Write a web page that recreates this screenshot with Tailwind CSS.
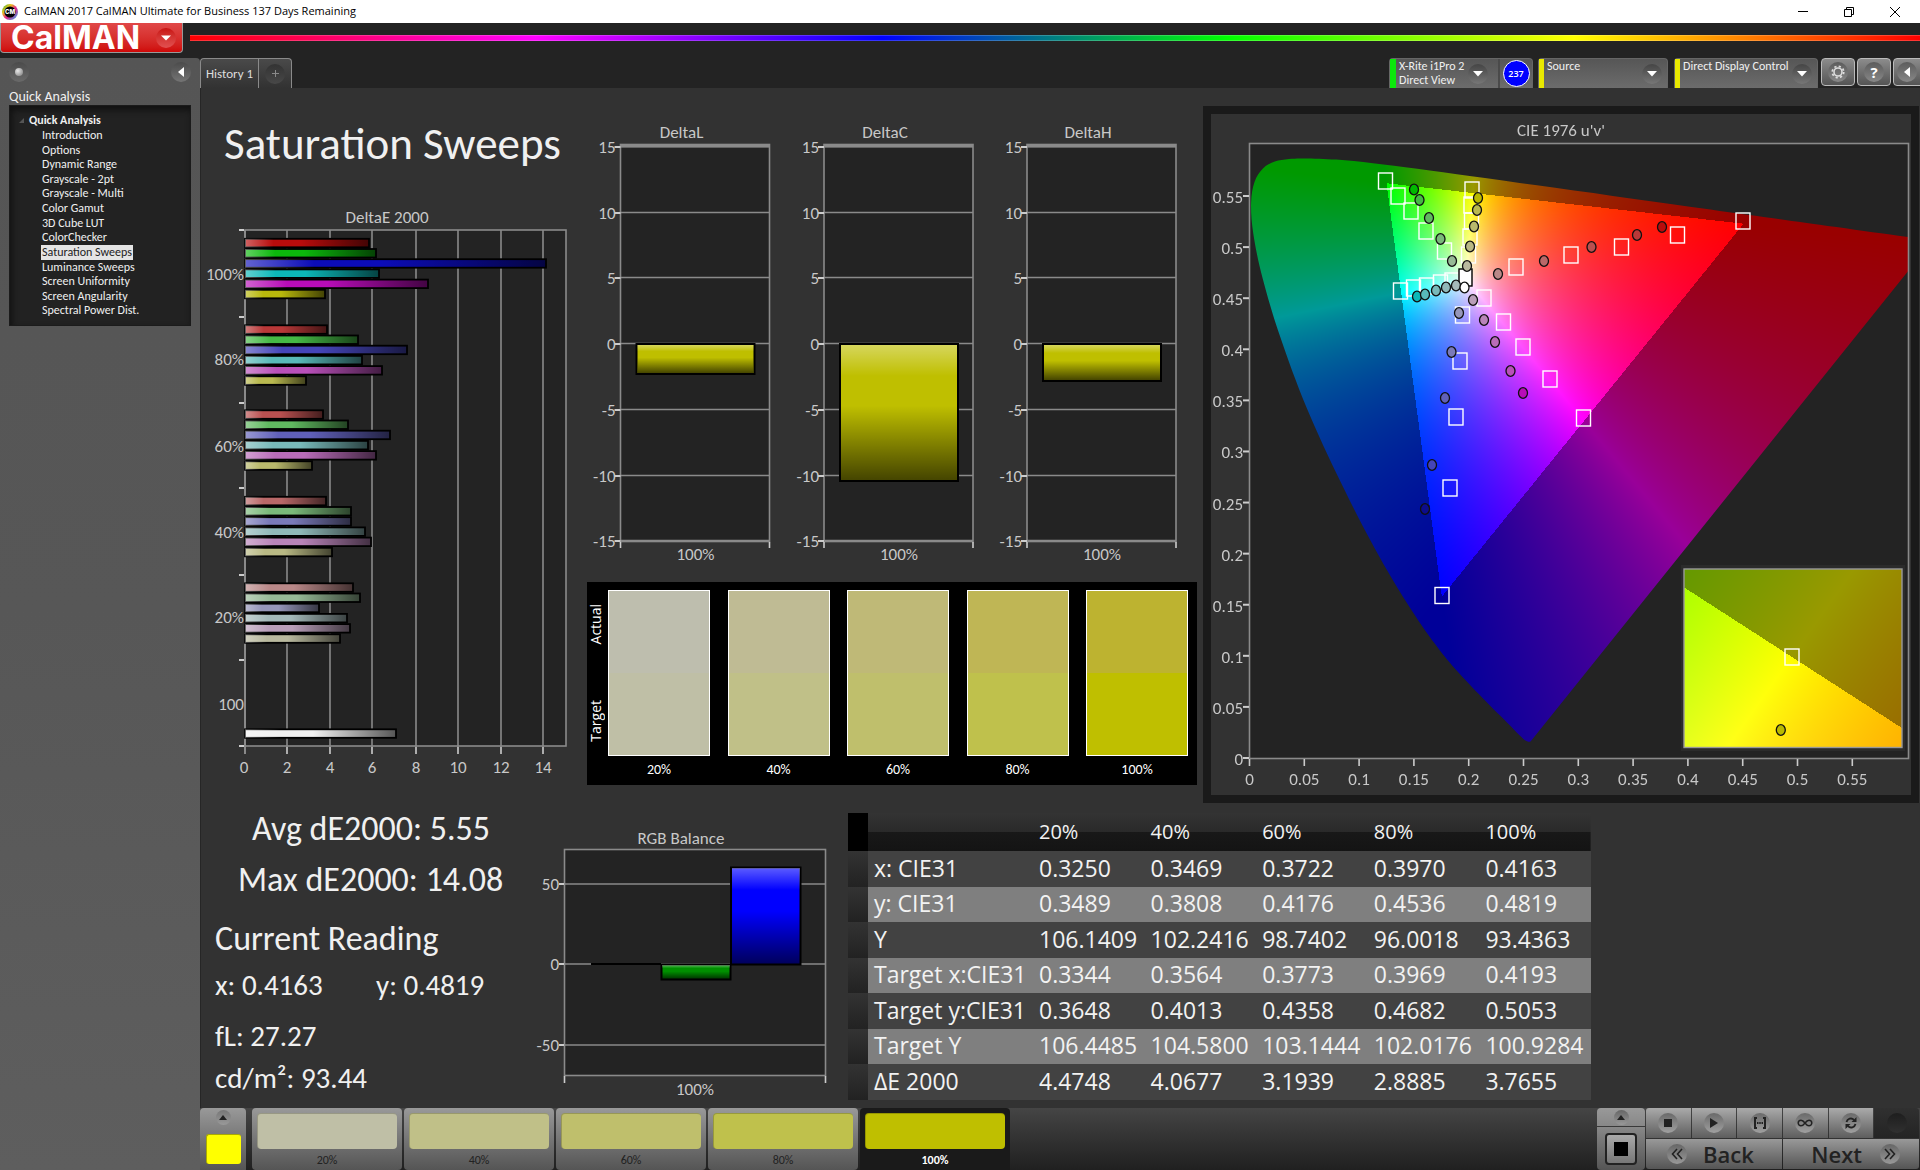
<!DOCTYPE html>
<html lang="en">
<head>
<meta charset="utf-8">
<title>CalMAN 2017</title>
<script src="https://cdn.jsdelivr.net/npm/@tailwindcss/browser@4"></script>
</head>
<body class="min-h-screen flex flex-col overflow-x-hidden bg-[#232323] font-[Carlito,Lato,sans-serif] text-[#f0f0f0]">

<!-- Window title bar -->
<div class="flex h-[23px] items-center bg-white pl-[2px] text-black">
  <svg width="16" height="16" viewBox="0 0 16 16"><defs><linearGradient id="lg" x1="0" y1="0" x2="1" y2="1"><stop offset="0" stop-color="#1fae3c"/><stop offset=".3" stop-color="#e8c21a"/><stop offset=".55" stop-color="#e2208c"/><stop offset="1" stop-color="#22b8f0"/></linearGradient></defs><circle cx="8" cy="8" r="8" fill="url(#lg)"/><circle cx="8" cy="8" r="5.6" fill="#000"/><text x="8" y="10.4" text-anchor="middle" font-family="Inter" font-size="6" font-weight="800" fill="#fff">CM</text></svg>
  <span class="ml-[6px] grow font-['Open_Sans',sans-serif] text-[11px]">CalMAN 2017 CalMAN Ultimate for Business 137 Days Remaining</span>
  <div class="mr-[2px] flex">
    <button aria-label="Minimize" class="flex w-[46px] justify-center"><svg width="12" height="12" viewBox="0 0 12 12"><path d="M1 5.500h10" stroke="#000"/></svg></button>
    <button aria-label="Restore" class="flex w-[46px] justify-center"><svg width="12" height="12" viewBox="0 0 12 12" fill="none" stroke="#000"><path d="M1.500 3.500h7v7h-7zM3.500 3.500v-2h7v7h-2"/></svg></button>
    <button aria-label="Close" class="flex w-[46px] justify-center"><svg width="12" height="12" viewBox="0 0 12 12" stroke="#000"><path d="M1 1l10 10M11 1L1 11"/></svg></button>
  </div>
</div>

<!-- Brand strip -->
<div class="flex h-[35px] items-start">
  <button class="flex h-[30px] w-[183px] items-center rounded-b-[4px] border-x border-b border-[#999] bg-linear-to-b from-[#e04848] to-[#cf0606] pl-[10px]">
    <span class="w-[133px] text-left font-[Inter,sans-serif] text-[32px] leading-[28px] font-bold text-white">CalMAN</span>
    <span class="ml-[12px] flex size-5 items-center justify-center rounded-full bg-linear-to-b from-[#c81010] to-[#e25050]"><svg width="10" height="6" viewBox="0 0 10 6"><path d="M0 .5h10L5 5.500z" fill="#fff"/></svg></span>
  </button>
  <div class="mt-[12px] ml-[7px] h-[6px] grow border-y border-white/20 bg-[linear-gradient(90deg,#f00,#f0f,#00f,#0f0,#ff0,#f00)] bg-origin-border"></div>
</div>

<div class="flex grow">
  <!-- Workflow sidebar -->
  <aside class="w-[200px] shrink-0 rounded-tr-[4px] bg-linear-to-b from-[#555] via-[#575757] to-[#5e5e5e] px-[9px]">
    <div class="flex h-[28px] items-center justify-between">
      <button aria-label="Pin" class="flex size-5 items-center justify-center rounded-full bg-linear-to-b from-[#4b4b4b] to-[#6a6a6a]"><span class="size-2 rounded-full bg-radial-[at_35%_35%] from-[#e8e8e8] to-[#777]"></span></button>
      <button aria-label="Collapse" class="flex size-5 items-center justify-center rounded-full bg-linear-to-b from-[#4b4b4b] to-[#757575]"><svg width="6" height="10" viewBox="0 0 6 10"><path d="M6 0v10L0 5z" fill="#fff"/></svg></button>
    </div>
    <h2 class="h-[19px] text-[14px] leading-[21px]">Quick Analysis</h2>
    <nav class="h-[221px] border border-[#1b1b1b] bg-[#222] pt-[7px] shadow-[inset_2px_4px_6px_#111]">
      <div class="flex h-[15px] items-center text-[12px] leading-[15px] font-bold"><svg class="ml-[9px] mr-[5px]" width="5" height="5" viewBox="0 0 5 5"><path d="M5 0v5H0z" fill="#555"/></svg>Quick Analysis</div>
      <ul class="grid h-[190px] auto-rows-fr pl-[31px] text-[12px] leading-[15px] [&_a]:inline-block [&_a]:px-px">
        <li><a href="#">Introduction</a></li><li><a href="#">Options</a></li><li><a href="#">Dynamic Range</a></li><li><a href="#">Grayscale - 2pt</a></li><li><a href="#">Grayscale - Multi</a></li><li><a href="#">Color Gamut</a></li><li><a href="#">3D Cube LUT</a></li><li><a href="#">ColorChecker</a></li><li><a href="#" class="bg-[#e4e4e4] text-[#222]">Saturation Sweeps</a></li><li><a href="#">Luminance Sweeps</a></li><li><a href="#">Screen Uniformity</a></li><li><a href="#">Screen Angularity</a></li><li><a href="#">Spectral Power Dist.</a></li>
      </ul>
    </nav>
  </aside>

  <div class="flex min-w-0 grow flex-col">
    <!-- Tabs and device selectors -->
    <div class="flex h-[30px] justify-between overflow-hidden">
      <div class="flex">
        <button class="w-[58px] rounded-tl-[4px] border-t border-l border-[#8a8a8a] bg-linear-to-b from-[#4a4a4a] to-[#323232] text-[13px] text-[#ddd]">History 1</button>
        <button aria-label="Add tab" class="flex w-[34px] items-center justify-center rounded-tr-[4px] border-t border-x border-[#8a8a8a] bg-linear-to-b from-[#4a4a4a] to-[#323232]"><span class="flex size-5 items-center justify-center rounded-full bg-linear-to-b from-[#333] to-[#484848]"><svg width="7" height="7" viewBox="0 0 7 7"><path d="M3.500 0v7M0 3.500h7" stroke="#8a8a8a"/></svg></span></button>
      </div>
      <div class="-mr-[10px] flex items-start text-[12px] leading-[14px]">
        <div class="mr-[5px] flex h-[30px] w-[144px] rounded-t-[4px] border-t border-x border-[#666] bg-linear-to-b from-[#565656] to-[#6c6c6c]">
          <span class="w-[6px] bg-[#0be80b]"></span>
          <button class="flex grow items-center justify-between pr-[10px] pl-[3px] text-left"><span class="pb-[2px]">X-Rite i1Pro 2<br>Direct View</span><span class="flex size-5 items-center justify-center rounded-full bg-linear-to-b from-[#454545] to-[#777]"><svg width="10" height="6" viewBox="0 0 10 6"><path d="M0 0h10L5 5.500z" fill="#fff"/></svg></span></button>
          <span class="flex w-[34px] items-center justify-center border-l-2 border-[#4a4a4a]"><span class="flex size-[27px] shrink-0 items-center justify-center rounded-full border border-white bg-[#0000ff] font-['Open_Sans',sans-serif] text-[9px] font-semibold text-white">237</span></span>
        </div>
        <button class="mr-[6px] flex h-[30px] w-[130px] rounded-t-[4px] border-t border-x border-[#666] bg-linear-to-b from-[#565656] to-[#6c6c6c]"><span class="h-full w-[5px] bg-[#e8e800]"></span><span class="grow pl-[3px] text-left">Source</span><span class="mt-[5px] mr-[5px] flex size-5 items-center justify-center rounded-full bg-linear-to-b from-[#454545] to-[#777]"><svg width="10" height="6" viewBox="0 0 10 6"><path d="M0 0h10L5 5.500z" fill="#fff"/></svg></span></button>
        <button class="mr-[3px] flex h-[30px] w-[144px] rounded-t-[4px] border-t border-x border-[#666] bg-linear-to-b from-[#565656] to-[#6c6c6c]"><span class="h-full w-[5px] bg-[#e8e800]"></span><span class="grow pl-[3px] text-left whitespace-nowrap">Direct Display Control</span><span class="mt-[5px] mr-[5px] flex size-5 shrink-0 items-center justify-center rounded-full bg-linear-to-b from-[#454545] to-[#777]"><svg width="10" height="6" viewBox="0 0 10 6"><path d="M0 0h10L5 5.500z" fill="#fff"/></svg></span></button>
        <button aria-label="Settings" class="mr-[2px] flex h-[28px] w-[34px] items-center justify-center rounded-[4px] border border-[#bbb] bg-linear-to-b from-[#8c8c8c] to-[#555]"><span class="flex size-5 items-center justify-center rounded-full bg-linear-to-b from-[#5c5c5c] to-[#888]"><svg width="14" height="14" viewBox="0 0 14 14" fill="none" stroke="#ddd"><circle cx="7" cy="7" r="4" stroke-width="1.600"/><circle cx="7" cy="7" r="5.700" stroke-width="1.800" stroke-dasharray="2.200 2.280"/></svg></span></button>
        <button aria-label="Help" class="mr-[2px] flex h-[28px] w-[34px] items-center justify-center rounded-[4px] border border-[#bbb] bg-linear-to-b from-[#8c8c8c] to-[#555]"><span class="flex size-5 items-center justify-center rounded-full bg-linear-to-b from-[#5c5c5c] to-[#888] font-['Open_Sans',sans-serif] text-[15px] font-bold text-white">?</span></button>
        <button aria-label="Hide" class="flex h-[28px] w-[37px] items-center rounded-[4px] border border-[#bbb] bg-linear-to-b from-[#8c8c8c] to-[#555] pl-[3px]"><span class="flex size-5 items-center justify-center rounded-full bg-linear-to-b from-[#5c5c5c] to-[#888]"><svg width="6" height="10" viewBox="0 0 6 10"><path d="M6 0v10L0 5z" fill="#fff"/></svg></span></button>
      </div>
    </div>

    <main class="grow border-l border-[#262626] bg-[#323232]">
      <div class="flex h-[715px]">
        <section class="w-[379px] shrink-0">
          <h1 class="mt-[20px] mb-[20px] pl-[23px] text-[45px] leading-[72px] whitespace-nowrap">Saturation Sweeps</h1>
          <svg id="deltae" width="379" height="590" viewBox="201 200 379 590" role="img" aria-label="DeltaE 2000"></svg>
        </section>
        <section class="w-[623px] shrink-0">
          <svg id="deltas" class="mt-[22px]" width="623" height="460" viewBox="580 110 623 460" role="img" aria-label="DeltaL, DeltaC, DeltaH"></svg>
          <div class="mt-[12px] ml-[7px] flex h-[203px] w-[610px] bg-black pt-[8px]">
            <div class="flex h-[166px] w-[21px] flex-col items-center justify-between py-[14px] pr-[4px] font-['Open_Sans',sans-serif] text-[14px] leading-[18px] font-medium text-white">
              <span class="rotate-180 [writing-mode:vertical-rl]">Actual</span><span class="rotate-180 [writing-mode:vertical-rl]">Target</span>
            </div>
            <div id="swatches" class="flex w-[580px] justify-between text-center text-[14px] text-white"></div>
          </div>
        </section>
        <section class="mt-[18px] mr-[1px] h-[697px] grow border-8 border-[#1a1a1a] bg-[#323232]">
          <div class="relative">
            <canvas id="gamut" width="700" height="680" class="absolute inset-0 h-full w-full"></canvas>
            <svg id="cie" class="relative block h-auto w-full" viewBox="1211 114 700 680" role="img" aria-label="CIE 1976 u'v'"></svg>
          </div>
        </section>
      </div>
      <div class="flex h-[305px] items-start">
        <section class="w-[329px] shrink-0 pl-[14px] text-[34px] leading-[51px] whitespace-nowrap">
          <p class="pl-[37px]">Avg dE2000: 5.55</p>
          <p class="pl-[23px]">Max dE2000: 14.08</p>
          <p class="mt-[8px]">Current Reading</p>
          <p class="flex text-[29px] leading-[42px]"><span class="w-[161px]">x: 0.4163</span><span>y: 0.4819</span></p>
          <p class="mt-[9px] text-[29px] leading-[42px]">fL: 27.27</p>
          <p class="text-[29px] leading-[42px]">cd/m²: 93.44</p>
        </section>
        <svg id="rgb" class="mt-[17px] shrink-0" width="310" height="285" viewBox="530 820 310 285" role="img" aria-label="RGB Balance"></svg>
        <table id="data" class="mt-[10px] ml-[8px] w-[743px] table-fixed border-collapse text-left font-['Open_Sans',sans-serif] text-[23px] leading-[30px] text-[#f2f2f2]">
          <colgroup><col class="w-[20px]"><col class="w-[165px]"><col><col><col><col><col></colgroup>
          <thead class="text-[20px]"><tr class="h-[38px] bg-[linear-gradient(#333,#2a2a2a_50%,#181818_50%,#141414)]"><td class="bg-black"></td><td></td><th class="pl-[6px] font-medium">20%</th><th class="pl-[6px] font-medium">40%</th><th class="pl-[6px] font-medium">60%</th><th class="pl-[6px] font-medium">80%</th><th class="pl-[6px] font-medium">100%</th></tr></thead>
          <tbody></tbody>
        </table>
      </div>
    </main>

    <!-- Pattern strip and transport controls -->
    <footer class="flex h-[62px] items-stretch bg-linear-to-b from-[#454545] to-[#202020] text-[#222]">
      <button aria-label="Current pattern" class="flex w-[46px] flex-col items-center rounded-t-[4px] bg-linear-to-b from-[#999] to-[#555]">
        <span class="mt-[2px] flex size-[15px] items-center justify-center rounded-full bg-linear-to-b from-[#777] to-[#999]"><svg width="8" height="5" viewBox="0 0 8 5"><path d="M0 5h8L4 0z" fill="#222"/></svg></span>
        <span class="mt-[9px] h-[30px] w-[35px] rounded-[3px] border-t border-l border-[#aaaa00] bg-[#ffff00]"></span>
      </button>
      <div id="patterns" class="ml-[6px] flex grow gap-[2px] text-[12px] leading-[18px]"></div>
      <div class="flex w-[48px] flex-col gap-px">
        <button aria-label="Expand" class="flex h-[18px] items-center justify-center rounded-t-[4px] bg-linear-to-b from-[#999] to-[#888]"><span class="flex size-[15px] items-center justify-center rounded-full bg-linear-to-b from-[#666] to-[#999]"><svg width="8" height="5" viewBox="0 0 8 5"><path d="M0 5h8L4 0z" fill="#222"/></svg></span></button>
        <button aria-label="Pattern window" class="flex grow items-center justify-center rounded-b-[4px] bg-linear-to-b from-[#888] to-[#555]"><span class="flex size-8 items-center justify-center rounded-[4px] border-2 border-[#222] bg-linear-to-b from-[#aaa] to-[#777]"><span class="size-[14px] bg-black"></span></span></button>
      </div>
      <div class="ml-px grid w-[273px] grid-cols-6 grid-rows-[30px_30px] gap-x-px gap-y-px">
        <button aria-label="Stop" class="flex items-center justify-center rounded-tl-[3px] bg-linear-to-b from-[#aaa] to-[#5e5e5e]"><span class="flex size-5 items-center justify-center rounded-full bg-linear-to-b from-[#6a6a6a] to-[#a0a0a0]"><span class="size-[8px] bg-[#222]"></span></span></button>
        <button aria-label="Play" class="flex items-center justify-center bg-linear-to-b from-[#aaa] to-[#5e5e5e]"><span class="flex size-5 items-center justify-center rounded-full bg-linear-to-b from-[#6a6a6a] to-[#a0a0a0]"><svg width="9" height="10" viewBox="0 0 9 10"><path d="M1 0v10l8-5z" fill="#222"/></svg></span></button>
        <button aria-label="Read series" class="flex items-center justify-center bg-linear-to-b from-[#aaa] to-[#5e5e5e]"><span class="flex size-5 items-center justify-center rounded-full bg-linear-to-b from-[#6a6a6a] to-[#a0a0a0]"><svg width="14" height="12" viewBox="0 0 14 12" fill="none" stroke="#222" stroke-width="2"><path d="M4 1H2v10h2M10 1h2v10h-2"/><path d="M4 6h1.500M6.250 6h1.500M8.500 6h1.500"/></svg></span></button>
        <button aria-label="Continuous" class="flex items-center justify-center bg-linear-to-b from-[#aaa] to-[#5e5e5e]"><span class="flex size-5 items-center justify-center rounded-full bg-linear-to-b from-[#6a6a6a] to-[#a0a0a0]"><svg width="16" height="8" viewBox="0 0 16 8" fill="none" stroke="#222" stroke-width="1.500"><path d="M8 4C6.500 2 5.500 1.200 4 1.200a2.800 2.800 0 0 0 0 5.600C5.500 6.800 6.500 6 8 4s2.500-2.800 4-2.800a2.800 2.800 0 0 1 0 5.600C10.500 6.800 9.500 6 8 4z"/></svg></span></button>
        <button aria-label="Refresh" class="flex items-center justify-center bg-linear-to-b from-[#aaa] to-[#5e5e5e]"><span class="flex size-5 items-center justify-center rounded-full bg-linear-to-b from-[#6a6a6a] to-[#a0a0a0]"><svg width="14" height="14" viewBox="0 0 14 14" fill="none" stroke="#222" stroke-width="1.800"><path d="M2.500 6a4.500 4.500 0 0 1 7.500-2.200M11.500 8a4.500 4.500 0 0 1-7.500 2.200"/><path d="M12.500 1v5h-5zM1.500 13V8h5z" fill="#222" stroke="none"/></svg></span></button>
        <button aria-label="Record" class="flex items-center justify-center rounded-tr-[3px] bg-linear-to-b from-[#303030] to-[#242424]"><span class="size-5 rounded-full bg-linear-to-b from-[#1e1e1e] to-[#303030]"></span></button>
        <button class="col-span-3 flex items-center gap-[16px] rounded-bl-[3px] bg-linear-to-b from-[#999] to-[#555] pl-[21px] font-['Open_Sans',sans-serif] text-[22px] leading-[30px] font-semibold"><span class="flex size-5 items-center justify-center rounded-full bg-linear-to-b from-[#666] to-[#999]"><svg width="12" height="12" viewBox="0 0 12 12" fill="none" stroke="#222" stroke-width="1.600"><path d="M6 1L1.500 6 6 11M11 1L6.500 6 11 11"/></svg></span>Back</button>
        <button class="col-span-3 flex items-center justify-end gap-[18px] rounded-br-[3px] bg-linear-to-b from-[#999] to-[#555] pr-[19px] font-['Open_Sans',sans-serif] text-[22px] leading-[30px] font-semibold">Next<span class="flex size-5 items-center justify-center rounded-full bg-linear-to-b from-[#666] to-[#999]"><svg width="12" height="12" viewBox="0 0 12 12" fill="none" stroke="#222" stroke-width="1.600"><path d="M1 1l4.500 5L1 11M6 1l4.500 5L6 11"/></svg></span></button>
      </div>
      <div class="w-[1px]"></div>
    </footer>
  </div>
</div>

<script>
const $ = id => document.getElementById(id);
const FONT = 'font-family="Carlito,Lato,sans-serif" font-size="17" fill="#c8c8c8"';
const text = (x, y, s, anchor = 'middle') => `<text x="${x}" y="${y}" text-anchor="${anchor}" ${FONT}>${s}</text>`;
const line = (x1, y1, x2, y2, c = '#8a8a8a', w = 1.6) => `<path d="M${x1} ${y1}L${x2} ${y2}" stroke="${c}" stroke-width="${w}"/>`;
const rect = (x, y, w, h, fill, stroke = '#8a8a8a', sw = 1.6) => `<rect x="${x}" y="${y}" width="${w}" height="${h}" fill="${fill}" stroke="${stroke}" stroke-width="${sw}"/>`;
const shade = (id, dir) => `<defs><linearGradient id="${id}" ${dir}><stop offset="0" stop-color="#fff" stop-opacity=".36"/><stop offset=".23" stop-color="#fff" stop-opacity="0"/><stop offset=".45" stop-color="#000" stop-opacity="0"/><stop offset="1" stop-color="#000" stop-opacity=".64"/></linearGradient></defs>`;

/* DeltaE 2000 */
{
  let s = shade('hz', 'x2="1" y2="0"') + text(387, 223, 'DeltaE 2000') + rect(245, 230, 321, 516, '#232323');
  [287, 330, 372, 416, 458, 501, 543].forEach((x, i) => s += line(x, 230, x, 747) + line(x, 747, x, 754, '#ccc') + text(x, 773, (i + 1) * 2));
  s += text(244, 773, 0) + line(245, 230, 245, 754, '#8a8a8a', 2);
  [230, 317, 403, 488, 575, 660, 746].forEach(y => s += line(239, y, 244, y, '#ccc', 2));
  const groups = [
    ['100%', 243, [370, 377, 547, 380, 429, 326], ['#b80c0c', '#0cb80c', '#0c0cb8', '#0cb8b8', '#b80cb8', '#b8b80c']],
    ['80%', 329.5, [328, 359, 408, 363, 383, 307], ['#b93838', '#45b945', '#4545b9', '#58b9b9', '#b950b9', '#b9b950']],
    ['60%', 414.5, [324, 349, 391, 369, 377, 313], ['#b95050', '#60b960', '#6060b9', '#78b9b9', '#b96cb9', '#b9b96c']],
    ['40%', 501, [327, 352, 352, 366, 372, 333], ['#b96868', '#7ab97a', '#7a7ab9', '#90b9b9', '#b984b9', '#b9b984']],
    ['20%', 587.5, [354, 361, 320, 348, 351, 341], ['#b98888', '#96b996', '#9696b9', '#a4b9b9', '#b99eb9', '#b9b99e']],
    ['100', 682.5, [0, 0, 0, 0, 0, 397], ['', '', '', '', '', '#f0f0f0']]];
  groups.forEach(([label, y0, ends, cols], g) => {
    s += text(244, [280, 365, 452, 538, 623, 710][g], label, 'end');
    ends.forEach((e, i) => { if (!e) return; const y = y0 + i * 10.2 - 4.200, w = e - 246;
      s += rect(245, y, w, 8.500, cols[i], '#000', 1.800) + rect(245, y, w, 8.500, 'url(#hz)', 'none'); });
  });
  $('deltae').innerHTML = s;
}

/* DeltaL / DeltaC / DeltaH */
{
  let s = shade('vt', 'x2="0" y2="1"');
  [['DeltaL', 620.5, 374], ['DeltaC', 824, 481], ['DeltaH', 1027, 381]].forEach(([t, x, b]) => {
    s += text(x + 61, 138, t) + rect(x, 144.500, 149, 397, '#232323') + line(x, 146, x + 149, 146, '#8a8a8a', 3) + line(x, 541, x + 149, 541, '#8a8a8a', 2);
    [147, 213, 278, 344, 410, 476, 541].forEach((y, i) => {
      s += line(x, y - .5, x + 149, y - .5) + line(x - 6, y, x, y, '#ccc', 2) + text(x - 5, y + 6, 15 - i * 5, 'end'); });
    s += line(x, 542, x, 548, '#ccc') + line(x + 149, 542, x + 149, 548, '#ccc') + text(x + 75, 560, '100%');
    s += rect(x + 16, 344, 118, b - 344, '#bfbf00', '#000', 2) + rect(x + 17, 345, 116, b - 346, 'url(#vt)', 'none');
  });
  $('deltas').innerHTML = s;
}

/* RGB balance */
{
  let s = shade('vr', 'x2="0" y2="1"') + text(681, 844, 'RGB Balance') + rect(564.500, 849.500, 261, 226, '#232323');
  [[50, 884], [0, 964], [-50, 1045]].forEach(([v, y]) => s += line(564, y, 826, y) + line(559, y, 564, y, '#ccc', 2) + text(559, y + 6, v, 'end'));
  s += line(564.500, 1076, 564.500, 1083, '#ccc') + line(825.500, 1076, 825.500, 1083, '#ccc') + text(695, 1095, '100%');
  s += line(591, 964, 661, 964, '#000', 2) + rect(661.500, 964.500, 69, 15, '#009000', '#000', 2) + rect(662, 965, 68, 14, 'url(#vr)', 'none');
  s += rect(731, 867.500, 69.500, 97, '#0000ff', '#000', 2) + rect(732, 868, 68, 96, 'url(#vr)', 'none');
  $('rgb').innerHTML = s;
}

/* Actual / target swatches */
$('swatches').innerHTML = [['20%', '#bebeae', '#bfbfa6'], ['40%', '#bfbb94', '#c0c088'], ['60%', '#bfb977', '#bfbf6c'], ['80%', '#bfb655', '#bfc14c'], ['100%', '#bdb330', '#bfbf00']]
  .map(([l, a, t]) => `<div class="w-[102px]"><div class="flex h-[166px] flex-col border border-white"><div class="grow" style="background:${a}"></div><div class="grow" style="background:${t}"></div></div><div class="leading-[28px]">${l}</div></div>`).join('');

/* Readings table */
document.querySelector('#data tbody').innerHTML = [
  ['x: CIE31', '0.3250', '0.3469', '0.3722', '0.3970', '0.4163'],
  ['y: CIE31', '0.3489', '0.3808', '0.4176', '0.4536', '0.4819'],
  ['Y', '106.1409', '102.2416', '98.7402', '96.0018', '93.4363'],
  ['Target x:CIE31', '0.3344', '0.3564', '0.3773', '0.3969', '0.4193'],
  ['Target y:CIE31', '0.3648', '0.4013', '0.4358', '0.4682', '0.5053'],
  ['Target Y', '106.4485', '104.5800', '103.1444', '102.0176', '100.9284'],
  ['ΔE 2000', '4.4748', '4.0677', '3.1939', '2.8885', '3.7655']]
  .map((r, i) => `<tr class="${i % 2 ? 'h-[35px] bg-[#7f7f7f]' : 'h-[36px] bg-[#424242]'}"><td class="bg-linear-to-b from-[#333] to-[#222]"></td><th class="pb-[3px] pl-[6px] font-normal whitespace-nowrap">${r[0]}</th>${r.slice(1).map(v => `<td class="pb-[3px] pl-[6px]">${v}</td>`).join('')}</tr>`).join('');

/* Pattern buttons */
$('patterns').innerHTML = [['20%', '#bfbfa6'], ['40%', '#c0c088'], ['60%', '#bfbf6c'], ['80%', '#bfc14c'], ['100%', '#bfbf00']]
  .map(([l, c], i) => `<button class="${i == 4 ? 'flex w-[150px] flex-col items-center rounded-t-[4px] bg-[#1a1a1a] pt-[5px] font-bold text-white' : 'flex w-[150px] flex-col items-center rounded-[4px] bg-linear-to-b from-[#999] to-[#555] pt-[5px]'}"><span class="h-[36px] w-[140px] rounded-[4px] border-t border-l border-black/20" style="background:${c}"></span><span class="pt-[2px]">${l}</span></button>`).join('');

/* CIE 1976 u'v' axes and markers */
const PX = 1249.500, PY = 758, SU = 1096, SV = 1021.8;
{
  let s = text(1561, 136, "CIE 1976 u'v'") + rect(PX, 143.500, 659, 615, 'none');
  for (let i = 0; i < 12; i++) {
    const v = +(i * .05).toFixed(2), x = PX + v * SU, y = PY - v * SV;
    s += line(x, 759, x, 766, '#ccc') + text(x, 785, v) + line(1243, y, 1249, y, '#ccc', 2) + text(1243, y + 7, v, 'end');
  }
  [[1385.5,181],[1398,196],[1411,211],[1426,231],[1444.5,251],[1472,190],[1471,205],[1471.5,221],[1470,237],[1468.5,255],
   [1400.5,291],[1413.5,288],[1426.5,286],[1440.5,283],[1452,281],[1516,267],[1571,255],[1621.5,247],[1677.5,235],[1743,221],
   [1484,298],[1503.5,322],[1523,347],[1550,379],[1583.5,418],[1462.5,315],[1460,361],[1456,417],[1450,488],[1442,595.5]]
    .forEach(([x, y]) => s += rect(x - 7, y - 8, 14, 16, 'none', '#fff', 1.400));
  s += rect(1459, 269, 13, 17, '#fff', '#000', 1.400);
  const dots = {
    G: [['#00b900',1414,189.5],['#45b945',1419.5,200],['#60b960',1429,218],['#7ab97a',1440.5,239],['#96b996',1452,261]],
    Y: [['#b9b900',1478,198],['#b9b950',1477,210],['#b9b96c',1474,226.5],['#b9b984',1470,246.5],['#b9b99e',1467,266]],
    C: [['#0cb8b8',1417,296.5],['#58b9b9',1425,294.5],['#78b9b9',1436,290.5],['#90b9b9',1446,287.5],['#a4b9b9',1456,285.5]],
    R: [['#b80c0c',1662,227],['#b93838',1637,235],['#b95050',1591.5,247],['#b96868',1544,261],['#b98888',1498,274]],
    M: [['#b80cb8',1523,393],['#b950b9',1510.5,371],['#b96cb9',1495,342],['#b984b9',1484,320],['#b99eb9',1473,300]],
    B: [['#0c0c8c',1425,509],['#4545b9',1432,465],['#6060b9',1445,398],['#7a7ab9',1451.5,352],['#9696b9',1459,313]],
    W: [['#ffffff',1464.5,287.5]], Inset: [['#b9b900',1780.8,730]] };
  for (const k in dots) for (const [c, x, y] of dots[k]) s += `<ellipse cx="${x}" cy="${y}" rx="4.500" ry="5.300" fill="${c}" stroke="#111" stroke-width="1.300"/>`;
  s += rect(1684, 569, 218, 178.500, 'none', '#999', 1.400) + rect(1785, 649, 14, 16, 'none', '#fff', 1.400);
  $('cie').innerHTML = s;
}

/* Chromaticity colours */
{
  const ctx = $('gamut').getContext('2d'), OX = 1211, OY = 114;
  const colour = (u, v) => {
    const d = 6 * u - 16 * v + 12, x = 9 * u / d, y = 4 * v / d, X = x / y, Z = (1 - x - y) / y;
    let c = [3.2406 * X - 1.5372 - .4986 * Z, -.9689 * X + 1.8758 + .0415 * Z, .0557 * X - .204 + 1.057 * Z];
    const inside = Math.min(...c) >= 0, m = Math.max(...c), k = (inside ? 255 : 153) / m;
    return c.map(n => Math.max(0, n) * k);
  };
  const paint = (x0, y0, w, h, map) => {
    const cv = document.createElement('canvas'); cv.width = w; cv.height = h;
    const g = cv.getContext('2d'), im = g.createImageData(w, h);
    for (let j = 0, p = 0; j < h; j++) for (let i = 0; i < w; i++, p += 4) {
      const c = colour(...map(x0 + i + .5, y0 + j + .5));
      im.data[p] = c[0]; im.data[p + 1] = c[1]; im.data[p + 2] = c[2]; im.data[p + 3] = 255;
    }
    g.putImageData(im, 0, 0); return cv;
  };
  ctx.translate(-OX, -OY);
  ctx.fillStyle = '#232323'; ctx.fillRect(1249, 143, 660, 615);
  ctx.save(); ctx.beginPath(); ctx.rect(1250, 144, 658, 613); ctx.clip();
  const locus = [[.1741,.005],[.1733,.0048],[.1714,.0051],[.1689,.0069],[.1644,.0109],[.1566,.0177],[.144,.0297],[.1355,.0399],[.1241,.0578],[.1096,.0868],[.0913,.1327],[.0687,.2007],[.0454,.295],[.0235,.4127],[.0082,.5384],[.0039,.6548],[.0139,.7502],[.0389,.812],[.0743,.8338],[.1142,.8262],[.1547,.8059],[.2296,.7543],[.3016,.6923],[.3731,.6245],[.4441,.5547],[.5125,.4866],[.5752,.4242],[.627,.3725],[.6658,.334],[.6915,.3083],[.719,.2809],[.7347,.2653]]
    .map(([x, y]) => { const d = -2 * x + 12 * y + 3; return [PX + SU * 4 * x / d, PY - SV * 9 * y / d]; });
  ctx.beginPath(); ctx.moveTo(...locus[0]);
  for (let i = 0; i < locus.length - 1; i++) {
    const a = locus[Math.max(0, i - 1)], b = locus[i], c = locus[i + 1], e = locus[Math.min(locus.length - 1, i + 2)];
    ctx.bezierCurveTo(b[0] + (c[0] - a[0]) / 6, b[1] + (c[1] - a[1]) / 6, c[0] - (e[0] - b[0]) / 6, c[1] - (e[1] - b[1]) / 6, c[0], c[1]);
  }
  ctx.closePath(); ctx.clip();
  ctx.drawImage(paint(1249, 144, 660, 614, (x, y) => [(x - PX) / SU, (PY - y) / SV]), 1249, 144);
  ctx.restore();
  /* magnified view round the selected target */
  ctx.fillStyle = '#2b2b2b'; ctx.fillRect(1681, 565, 224, 186);
  ctx.drawImage(paint(1684, 569, 218, 179, (x, y) => {
    const dx = x - 1792, dy = y - 657, det = 217 * 90 + 64 * 140, a = (dx * 90 + dy * 64) / det, b = (217 * dy - 140 * dx) / det;
    return [.2040 + a * .0420 - b * .00076, .5529 - a * .0051 - b * .0105];
  }), 1684, 569);
}
</script>
</body>
</html>
